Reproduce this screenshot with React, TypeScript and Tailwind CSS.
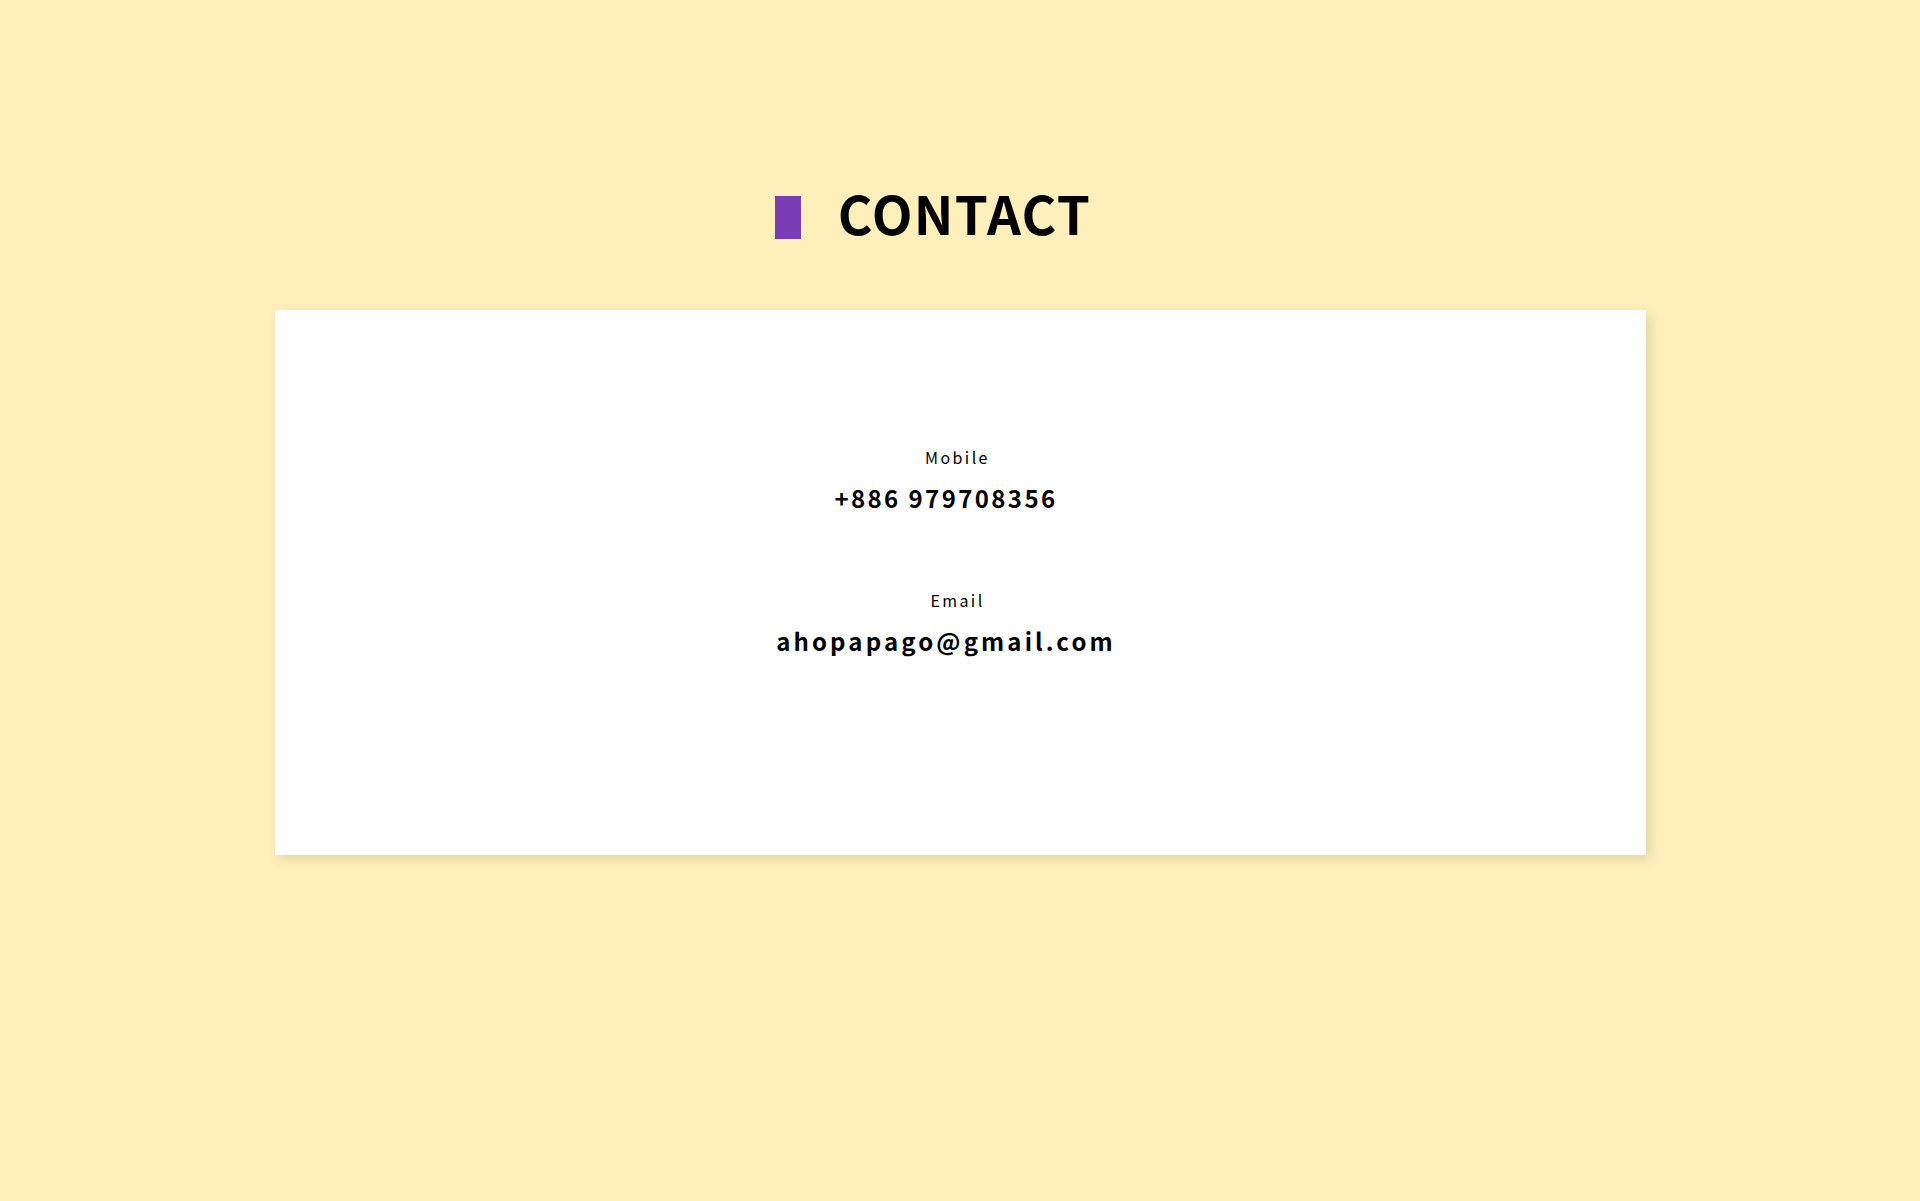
import React from 'react';

const font = { fontFamily: '"Noto Sans CJK TC", "Noto Sans", sans-serif' };

const ContactItem: React.FC<{ label: string; value: string; valueClass: string }> = ({ label, value, valueClass }) => (
  <div className="flex flex-col items-center">
    <span className="pr-[5px] text-[16px] leading-none font-normal tracking-[0.15em] text-black">{label}</span>
    <span className={`mt-[21px] pr-[28px] text-[24px] leading-none font-bold text-black ${valueClass}`}>{value}</span>
  </div>
);

const App: React.FC = () => {
  return (
    <div className="min-h-screen bg-[#fff0bb] pt-[186px]" style={font}>
      {/* Heading */}
      <div className="flex justify-center pr-[54px]">
        <div className="flex items-start">
          <div className="mt-[10px] h-[43px] w-[26px] bg-[#7a3db5]" />
          <h2 className="ml-[37px] text-[53px] leading-none font-bold tracking-[0.025em] text-black">CONTACT</h2>
        </div>
      </div>

      {/* Card */}
      <div className="mx-auto mt-[71px] h-[545px] w-[1371px] bg-white pt-[139px] shadow-[4px_4px_12px_rgba(0,0,0,0.12)]">
        <div className="flex flex-col items-center gap-[82px]">
          <ContactItem label="Mobile" value="+886 979708356" valueClass="tracking-[0.1em]" />
          <ContactItem label="Email" value="ahopapago@gmail.com" valueClass="tracking-[0.13em]" />
        </div>
      </div>
    </div>
  );
};

export default App;
